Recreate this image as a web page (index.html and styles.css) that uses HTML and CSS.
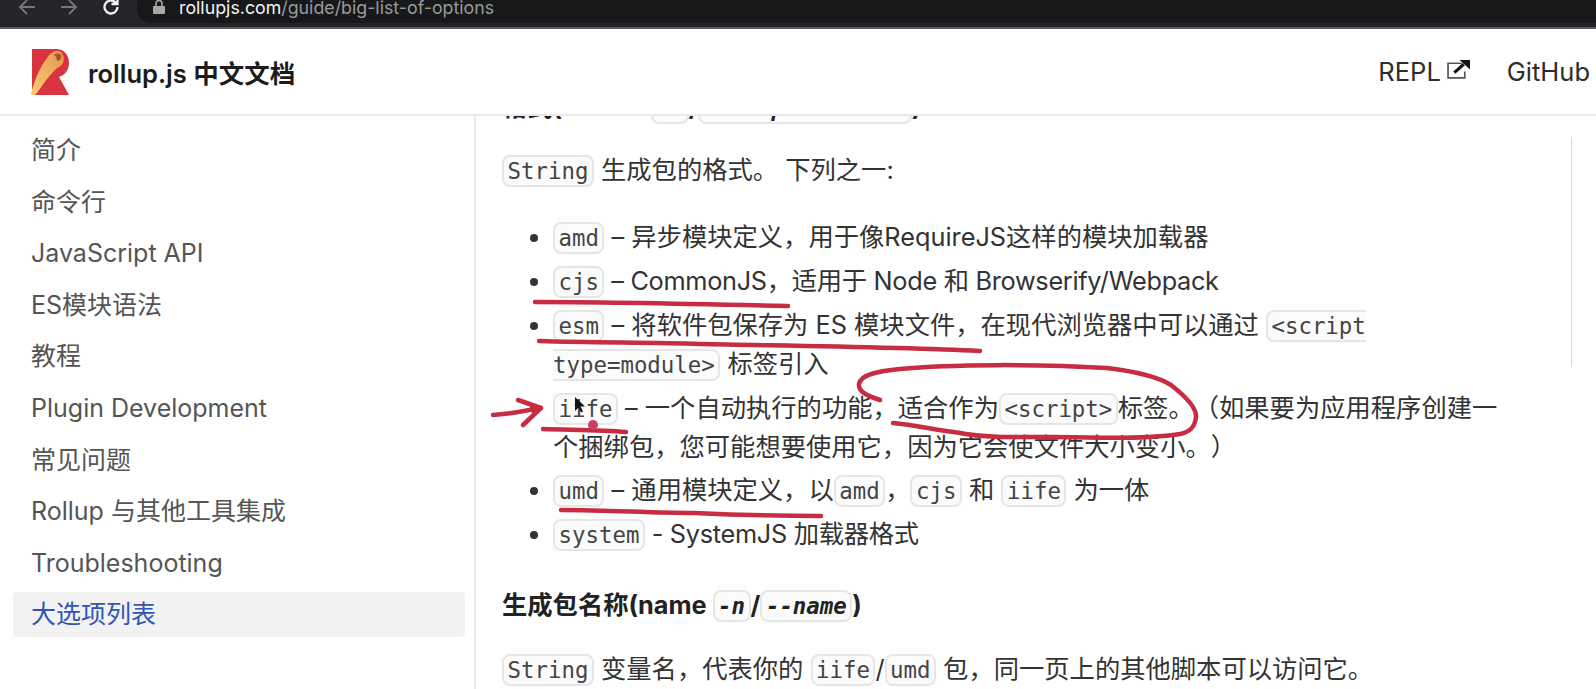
FILE: index.html
```html
<!DOCTYPE html>
<html lang="zh-CN">
<head>
    <meta charset="UTF-8">
    <meta name="viewport" content="width=device-width, initial-scale=1.0">
    <title>大选项列表 | rollup.js 中文文档</title>
    <link rel="stylesheet" href="styles.css">
</head>
<body>
<div class="page">

    <div class="browser-bar">
        <svg class="nav-icon dim" viewBox="0 0 18 18"><path d="M17 9H2M9 2 2 9l7 7"/></svg>
        <svg class="nav-icon dim" viewBox="0 0 18 18"><path d="M1 9h15M9 2l7 7-7 7"/></svg>
        <svg class="nav-icon reload" viewBox="0 0 18 18"><path d="M15.5 9a6.5 6.5 0 1 1-2-4.7L15.5 6M15.5 0v6h-6"/></svg>
        <div class="url-pill">
            <svg class="lock" viewBox="0 0 12 14"><path d="M3 6V3.500a3 3 0 0 1 6 0V6" fill="none" stroke="#a8a8a8" stroke-width="1.600"/><rect y="6" width="12" height="8" rx="1" fill="#a8a8a8"/></svg>
            <span class="url"><b>rollupjs.com</b>/guide/big-list-of-options</span>
        </div>
    </div>

    <header class="site-header">
        <svg class="logo" viewBox="0 0 38 46">
            <defs>
                <linearGradient id="scroll" x1="0" y1="1" x2="1" y2="0">
                    <stop offset="0" stop-color="#f8cc74"/>
                    <stop offset="1" stop-color="#e8964c"/>
                </linearGradient>
            </defs>
            <path fill="#d8333e" d="M1 0h24c8 0 13 6 13 14 0 7-4 12-10 14l10 18H1z"/>
            <path fill="url(#scroll)" d="M0 45C3 32 9 18 16 9 20 3 26 0 30 3c4 4 4 12-2 15-5 3-11 11-15 16L6 44c-2 3-6 3-6 1z"/>
            <path fill="#a9552c" d="M23 6c2-2 6-2 7 0 1 3-1 6-4 6 0-2-1-5-3-6z"/>
        </svg>
        <span class="site-title">rollup.js 中文文档</span>
        <nav class="top-nav">
            <a class="top-link">REPL
                <svg class="ext-icon" viewBox="0 0 22 18"><path d="M14 3H1v14h16v-6" fill="none" stroke="#555" stroke-width="1.600"/><path d="M7 12 16 4" stroke="#111" stroke-width="3" fill="none"/><path d="M12 0h10v9z" fill="#111"/></svg>
            </a>
            <a class="top-link">GitHub</a>
        </nav>
    </header>

    <div class="layout">
        <aside class="sidebar">
            <a class="side-item">简介</a>
            <a class="side-item">命令行</a>
            <a class="side-item">JavaScript API</a>
            <a class="side-item">ES模块语法</a>
            <a class="side-item">教程</a>
            <a class="side-item">Plugin Development</a>
            <a class="side-item">常见问题</a>
            <a class="side-item">Rollup 与其他工具集成</a>
            <a class="side-item">Troubleshooting</a>
            <a class="side-item active">大选项列表</a>
        </aside>

        <main class="content">
            <h3 class="first">格式(format <code>-f</code>/<code>--output.format</code>)</h3>
            <p><code>String</code> 生成包的格式。 下列之一:</p>
            <ul>
                <li><code>amd</code> – 异步模块定义，用于像RequireJS这样的模块加载器</li>
                <li><code>cjs</code><span class="tight"> – CommonJS，适用于 Node 和 Browserify/Webpack</span></li>
                <li><code>esm</code> – 将软件包保存为 ES 模块文件，在现代浏览器中可以通过 <code>&lt;script type=module&gt;</code> 标签引入</li>
                <li><code>iife</code> – 一个自动执行的功能，适合作为<code>&lt;script&gt;</code>标签。（如果要为应用程序创建一个捆绑包，您可能想要使用它，因为它会使文件大小变小。）</li>
                <li><code>umd</code> – 通用模块定义，以<code>amd</code>，<code>cjs</code> 和 <code>iife</code> 为一体</li>
                <li><code>system</code><span class="tight"> - SystemJS 加载器格式</span></li>
            </ul>
            <h3>生成包名称(name <code>-n</code>/<code>--name</code>)</h3>
            <p><code>String</code> 变量名，代表你的 <code>iife</code>/<code>umd</code> 包，同一页上的其他脚本可以访问它。</p>
        </main>

        <div class="rail"></div>
    </div>

    <!-- pen marks drawn over the page -->
    <svg class="ink" viewBox="0 0 1596 689">
        <path d="M535 302C610 302 700 304 788 306"/>
        <path d="M539 341C600 343 650 342 700 344C800 346 900 347 980 351"/>
        <path d="M493 415C510 414 525 411 539 408M518 400 541 408 523 425"/>
        <path d="M543 429C570 430 600 430 626 432"/>
        <circle class="blot" cx="593" cy="425" r="5"/>
        <path d="M880 400C868 396 858 392 859 384C861 374 880 371 900 369C950 364 1040 364 1107 368C1140 372 1160 378 1171 385C1185 396 1197 408 1196 417C1195 427 1190 432 1180 434C1150 439 1100 438 1054 437C1020 437 985 438 960 433C935 430 915 425 893 423"/>
        <path d="M561 510C610 510 650 513 694 513C740 515 780 516 821 516"/>
        <path class="pointer" d="M575 397v14l3.500-3.500 2.500 5 2-1-2.500-5H585z"/>
    </svg>

</div>
</body>
</html>
```

FILE: styles.css
```css
* {
    box-sizing: border-box;
}
html, body {
    margin: 0;
    height: 100%;
    overflow: hidden;
    background-color: white;
}
body {
    font-family: Inter, "Noto Sans CJK SC", sans-serif;
    font-size: 25px;
    color: #333;
    text-spacing-trim: space-all;
}
.page {
    position: relative;
    display: flex;
    flex-direction: column;
    height: 689px;
}

/* browser chrome, cropped at the top */
.browser-bar {
    display: flex;
    align-items: flex-start;
    flex: none;
    height: 29px;
    padding-left: 18px;
    background-color: #242528;
    border-bottom: 2px solid #5c5d60;
}
.nav-icon {
    flex: none;
    width: 18px;
    height: 18px;
    margin-top: -2px;
    margin-right: 24px;
    fill: none;
    stroke: #f2f2f2;
    stroke-width: 1.800;
}
.nav-icon.dim {
    stroke: #77787b;
}
.nav-icon.reload {
    stroke-width: 2.300;
}
.url-pill {
    display: flex;
    align-items: center;
    gap: 14px;
    flex: 1;
    height: 23px;
    margin-left: -7px;
    padding: 0 0 9px 16px;
    background-color: #17181a;
    border-bottom-left-radius: 14px;
}
.lock {
    width: 12px;
    height: 14px;
}
.url {
    font-size: 17.800px;
    color: #9a9a9c;
}
.url b {
    font-weight: 400;
    color: #f4f4f4;
}

.site-header {
    display: flex;
    align-items: center;
    flex: none;
    height: 87px;
    padding: 0 6px 0 31px;
    border-bottom: 2px solid #eaeaea;
    background-color: white;
}
.logo {
    width: 38px;
    height: 46px;
    margin-right: 19px;
}
.site-title {
    font-size: 25.500px;
    font-weight: 600;
    color: #1c1c1c;
}
.top-nav {
    display: flex;
    align-items: center;
    gap: 37px;
    margin-left: auto;
}
.top-link {
    display: flex;
    align-items: center;
    gap: 6px;
    font-size: 25.500px;
    color: #2c2c2c;
}
.ext-icon {
    width: 23px;
    height: 19px;
    margin-top: -5px;
}

.layout {
    display: flex;
    flex: 1;
    min-height: 0;
}
.sidebar {
    display: flex;
    flex-direction: column;
    gap: 6.600px;
    flex: none;
    width: 476px;
    padding: 12px 9px 0 13px;
    border-right: 2px solid #e8e8e8;
}
.side-item {
    height: 45px;
    line-height: 45px;
    padding-left: 18px;
    border-radius: 4px;
    color: #555;
}
.side-item.active {
    color: #3056b8;
    background-color: #f2f2f3;
}

.content {
    flex: 1;
    min-width: 0;
    padding-left: 26px;
    overflow: hidden;
    font-size: 25.300px;
    line-height: 38px;
}
h3 {
    margin: 32px 0 25px;
    font-size: 25.300px;
    font-weight: 700;
    color: #222;
}
h3.first {
    margin-top: -28px;
    margin-bottom: 24px;
}
p {
    margin: 0 0 28px;
}
ul {
    margin: 0;
    padding-left: 51px;
}
li {
    margin-bottom: 5px;
}
.tight {
    letter-spacing: -0.300px;
}
code {
    padding: 1px 3.500px;
    font-family: "DejaVu Sans Mono", monospace;
    font-size: 22.400px;
    color: #444;
    background-color: #fbfbfb;
    border: 2px solid #e6e6e6;
    border-radius: 8px;
}
h3 code {
    font-style: italic;
    color: #222;
}

.rail {
    flex: none;
    width: 1px;
    height: 230px;
    margin: 21px 24px 0 51px;
    background-color: #dcdcdc;
}

.ink {
    position: absolute;
    top: 0;
    left: 0;
    width: 1596px;
    height: 689px;
    pointer-events: none;
    fill: none;
    stroke: #c72c41;
    stroke-width: 4.500;
    stroke-linecap: round;
    stroke-linejoin: round;
}
.ink .blot {
    fill: #cf3f63;
    stroke: none;
}
.ink .pointer {
    fill: #111;
    stroke: none;
}
```
